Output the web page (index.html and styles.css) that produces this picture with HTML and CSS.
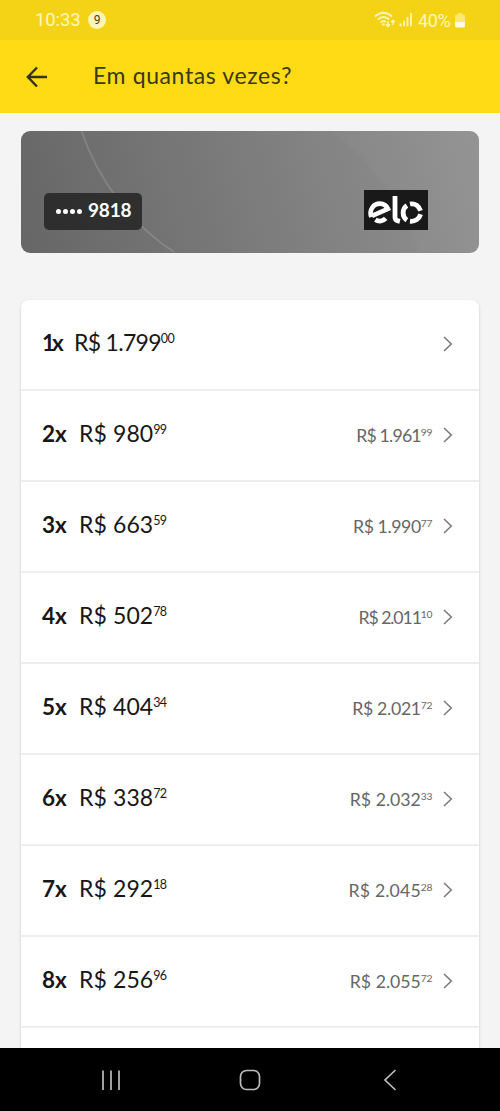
FILE: index.html
```html
<!DOCTYPE html>
<html lang="pt-BR">
<head>
<meta charset="utf-8">
<title>Em quantas vezes?</title>
<link rel="stylesheet" href="styles.css">
</head>
<body>
<div class="screen">
  <div class="status">
    <span class="clock">10:33</span>
    <span class="badge">9</span>
    <svg class="signals" width="40" height="18" viewBox="0 0 40 18" fill="none" stroke="#fff7b8" stroke-width="1.900">
      <path d="M1 5.5Q9.500 -2 18 5.500M3.800 8.600Q9.500 3.600 15 8.300M6.600 11.500Q9.500 9 11.800 11"/>
      <circle cx="9.500" cy="13.500" r="1.300" fill="#fff7b8" stroke="none"/>
      <path d="M14 10v5.500M12 13.300l2 2.200 2-2.200M19 14V9.500M17.200 11.200L19 9.300l1.800 1.900" stroke-width="1.400"/>
      <path d="M26.500 15.200v-2.700M30 15.200V9.800M33.500 15.200V6" stroke-width="1.800"/>
      <path d="M37 15.200V2" stroke-width="1.800"/>
    </svg>
    <span class="percent">40%</span>
    <svg class="battery" width="10" height="15" viewBox="0 0 10 15">
      <path d="M3 0h4v1.500h1.500Q10 1.500 10 3v6H0V3q0-1.500 1.500-1.500H3z" fill="#fbe86d"/>
      <path d="M0 9h10v4q0 1.500-1.500 1.500h-7Q0 14.500 0 13z" fill="#fffbe0"/>
    </svg>
  </div>
  <header class="appbar">
    <svg class="back" width="22" height="22" viewBox="0 0 22 22" fill="none" stroke="#333319" stroke-width="2.400">
      <path d="M21 11H2M11 1.500L1.800 11l9.200 9.500"/>
    </svg>
    <h1 class="title">Em quantas vezes?</h1>
  </header>
  <main class="content">
    <section class="card">
      <svg class="curves" width="458" height="121" viewBox="0 0 458 121" fill="none">
        <path d="M310 0Q369 43 398 121H458V0Z" fill="#fff" fill-opacity=".025"/>
        <path d="M60.500 0C77 49 111 94 153 121" stroke="#fff" stroke-opacity=".15" stroke-width="1.800"/>
      </svg>
      <div class="number"><span class="dots"><i></i><i></i><i></i><i></i></span>9818</div>
      <svg class="elo" width="64" height="40" viewBox="0 0 64 40" fill="none" stroke="#fff" stroke-width="4.800">
        <path d="M0 0h64v40H0z" fill="#191919" stroke="none"/>
        <path d="M7.300 27C4.800 20 9.300 13.600 15.900 13.600c4 0 6.600 2 8.100 5.300L8 25.900" stroke-width="4.600"/>
        <path d="M11.400 29.800c3.600 2.200 7.700 1.300 10.300-1.400"/>
        <path d="M31 6v21.200q0 2.900 2.400 3.500l2.500.6"/>
        <path d="M42.900 15.600c-5 3.200-5 11.300-.1 14.600M46 14c5.200-1 8.900 2.200 10.500 6.800M46 31.200c5.300.6 9.100-2.400 10.600-7"/>
      </svg>
    </section>
    <ul class="plans">
      <li class="plan"><b class="times">1x</b><span class="price">R$ 1.799<sup>00</sup></span><svg class="go" viewBox="0 0 10 16"><path d="M1 1l7.300 7L1 15"/></svg></li>
      <li class="plan"><b class="times">2x</b><span class="price">R$ 980<sup>99</sup></span><span class="total">R$ 1.961<sup>99</sup></span><svg class="go" viewBox="0 0 10 16"><path d="M1 1l7.300 7L1 15"/></svg></li>
      <li class="plan"><b class="times">3x</b><span class="price">R$ 663<sup>59</sup></span><span class="total">R$ 1.990<sup>77</sup></span><svg class="go" viewBox="0 0 10 16"><path d="M1 1l7.300 7L1 15"/></svg></li>
      <li class="plan"><b class="times">4x</b><span class="price">R$ 502<sup>78</sup></span><span class="total">R$ 2.011<sup>10</sup></span><svg class="go" viewBox="0 0 10 16"><path d="M1 1l7.300 7L1 15"/></svg></li>
      <li class="plan"><b class="times">5x</b><span class="price">R$ 404<sup>34</sup></span><span class="total">R$ 2.021<sup>72</sup></span><svg class="go" viewBox="0 0 10 16"><path d="M1 1l7.300 7L1 15"/></svg></li>
      <li class="plan"><b class="times">6x</b><span class="price">R$ 338<sup>72</sup></span><span class="total">R$ 2.032<sup>33</sup></span><svg class="go" viewBox="0 0 10 16"><path d="M1 1l7.300 7L1 15"/></svg></li>
      <li class="plan"><b class="times">7x</b><span class="price">R$ 292<sup>18</sup></span><span class="total">R$ 2.045<sup>28</sup></span><svg class="go" viewBox="0 0 10 16"><path d="M1 1l7.300 7L1 15"/></svg></li>
      <li class="plan"><b class="times">8x</b><span class="price">R$ 256<sup>96</sup></span><span class="total">R$ 2.055<sup>72</sup></span><svg class="go" viewBox="0 0 10 16"><path d="M1 1l7.300 7L1 15"/></svg></li>
    </ul>
  </main>
  <nav class="navbar">
    <svg width="20" height="22" viewBox="0 0 20 22" fill="none" stroke="#bdbdbd" stroke-width="1.700"><path d="M2 1.500v19.500M10 1.500v19.500M18 1.500v19.500"/></svg>
    <svg width="22" height="22" viewBox="0 0 22 22" fill="none" stroke="#bdbdbd" stroke-width="1.700"><rect x="1.500" y="1.500" width="19" height="19" rx="6"/></svg>
    <svg width="14" height="22" viewBox="0 0 14 22" fill="none" stroke="#bdbdbd" stroke-width="1.700"><path d="M12.500 1L2 11l10.500 10"/></svg>
  </nav>
</div>
</body>
</html>
```
FILE: styles.css
```css
* { box-sizing: border-box; }
body { margin: 0; font-family: Lato, "Open Sans", sans-serif; background: #f4f4f4; }
svg { display: block; flex: none; }
.screen { display: flex; flex-direction: column; width: 500px; height: 1111px; overflow: hidden; }
.status {
  display: flex; align-items: center; flex: none; height: 40px;
  padding: 0 35px 0 35px; background: #f4d316;
  color: #fff7b8; font-family: Roboto, sans-serif; font-size: 18px;
}
.clock { font-size: 18.5px; width: 53px; letter-spacing: -.1px; }
.badge {
  width: 18px; height: 18px; border-radius: 50%; background: #fdf4b5;
  color: #45412a; font-size: 12px; line-height: 18px; text-align: center;
}
.signals { margin-left: auto; margin-right: 4px; }
.percent { width: 36px; letter-spacing: -.4px; white-space: nowrap; }
.battery { margin-left: 1px; }
.appbar { display: flex; align-items: center; flex: none; height: 73px; padding-left: 26px; background: #ffdb15; }
.title { margin: -3px 0 0 45px; font-size: 23px; font-weight: 400; line-height: 30px; letter-spacing: .62px; color: #3b3817; }
.content { flex: 1; min-height: 0; padding: 18px 21px 0; overflow: hidden; }
.card {
  position: relative; display: flex; align-items: flex-start; justify-content: space-between;
  height: 122px; padding: 59px 51px 0 23px; border-radius: 9px; overflow: hidden;
  background: linear-gradient(75deg, #666, #929292);
}
.curves { position: absolute; inset: 0; }
.number {
  position: relative; display: flex; align-items: center; width: 98px; height: 37px; margin-top: 3px;
  padding: 0 0 3px 12px; border-radius: 5px; background: rgba(40, 40, 40, .9);
  color: #fff; font-size: 19px; font-weight: 700; line-height: 34px; letter-spacing: -.2px;
}
.dots { display: flex; gap: 2px; margin-right: 6px; padding-top: 3px; }
.dots i { width: 5px; height: 5px; border-radius: 50%; background: #fff; }
.elo { position: relative; }
.plans {
  list-style: none; margin: 47px 0 0; padding: 0; height: 900px;
  background: #fff; border-radius: 8px 8px 0 0; box-shadow: 0 1px 3px rgba(0, 0, 0, .17);
}
.plan { display: flex; align-items: baseline; height: 91px; padding: 27px 26px 0 21px; border-bottom: 2px solid #eee; color: #171717; line-height: 30px; }
.times { width: 37px; font-size: 22.5px; }
.price { font-size: 23px; letter-spacing: .1px; white-space: nowrap; }
.plan:first-child .times { width: 32px; letter-spacing: -3px; }
.plan:first-child .price { letter-spacing: -.7px; }
.total { margin-left: auto; font-size: 17.7px; color: #666; white-space: nowrap; }
.plan:nth-child(2) .total { letter-spacing: -.8px; }
.plan:nth-child(3) .total { letter-spacing: -.4px; }
.plan:nth-child(4) .total { letter-spacing: -1.1px; }
.plan:nth-child(5) .total { letter-spacing: -.3px; }
.plan:nth-child(7) .total { letter-spacing: .15px; }
.plan .price sup { font-size: 12.5px; line-height: 0; vertical-align: 8px; letter-spacing: -.7px; }
.plan .total sup { font-size: 10.3px; line-height: 0; vertical-align: 6.5px; letter-spacing: -.4px; }
.go { width: 10px; height: 16px; margin: 9px 0 0 11px; align-self: flex-start; fill: none; stroke: #777; stroke-width: 1.5; }
.plan:first-child .go { margin-left: auto; }
.navbar { display: flex; align-items: center; flex: none; height: 63px; padding: 0 103px 0 101px; justify-content: space-between; background: #000; }
.navbar svg:nth-child(2) { margin-right: 4px; }
```
